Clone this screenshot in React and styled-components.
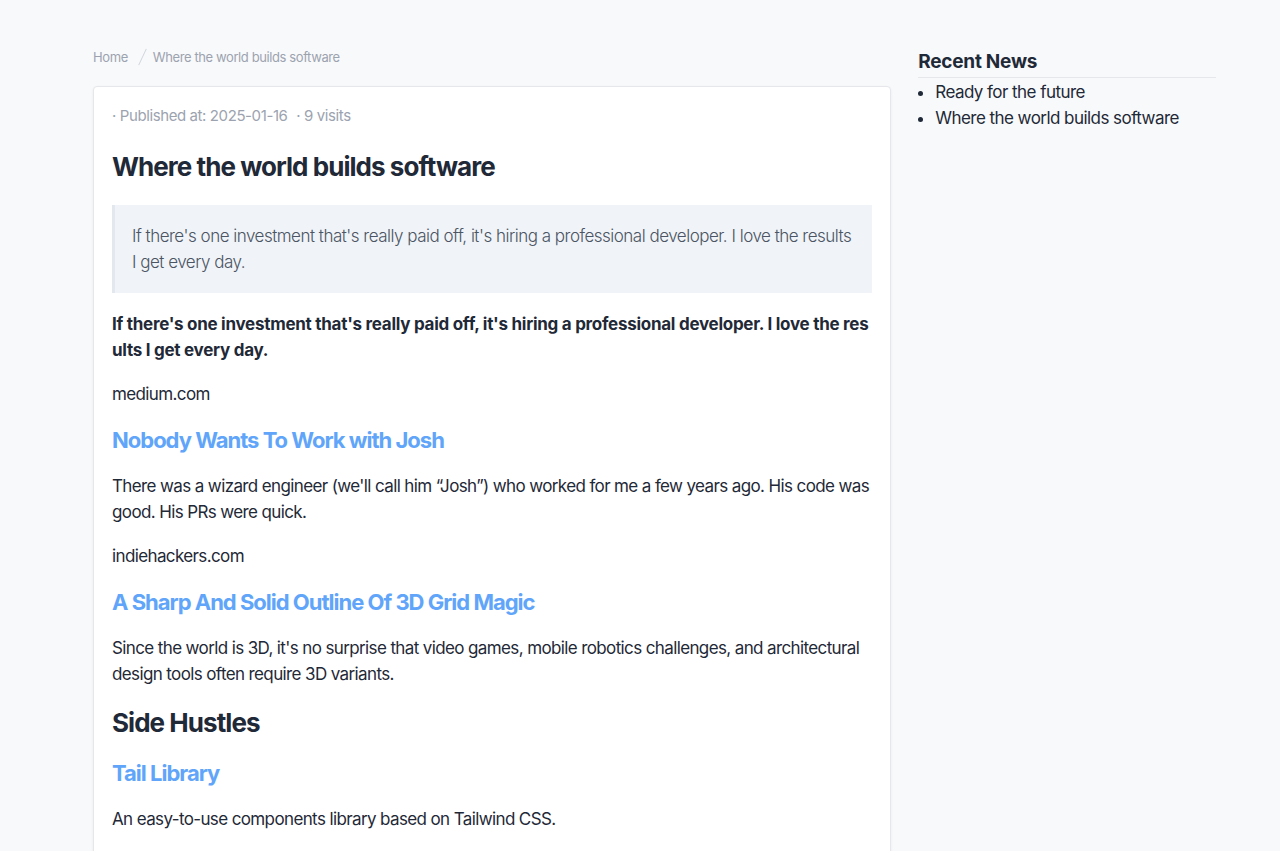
import React from 'react';
import styled, { createGlobalStyle } from 'styled-components';

const GlobalStyle = createGlobalStyle`
  body {
    margin: 0;
    background: #f8f9fb;
    font-family: Inter, "Noto Sans", sans-serif;
    color: #1f2937;
  }
`;

const Page = styled.div`
  display: flex;
  gap: 27px;
  padding: 47px 64px 0 93px;
  align-items: flex-start;
`;

const Main = styled.div`
  width: 799px;
  display: flex;
  flex-direction: column;
  gap: 19px;
`;

const Breadcrumb = styled.nav`
  display: flex;
  align-items: center;
  font-size: 13px;
  line-height: 20px;
  color: #9ca3af;
  letter-spacing: -0.4px;
`;

const Crumb = styled.span`
  color: #9ca3af;
`;

const Slash = styled.span`
  display: inline-block;
  width: 1px;
  height: 18px;
  background: #d1d5db;
  transform: rotate(25deg);
  margin: 0 10px 0 14px;
`;

const Card = styled.article`
  background: #fff;
  border: 1px solid #e5e7eb;
  border-radius: 4px;
  box-shadow: 0 1px 3px rgba(0, 0, 0, 0.06);
  padding: 18px 18px 40px;
  display: flex;
  flex-direction: column;
  gap: 18px;
`;

const Meta = styled.div`
  font-size: 15px;
  line-height: 22px;
  color: #9ca3af;
  margin-bottom: 6px;
  letter-spacing: -0.4px;
  span + span { margin-left: 5px; }
`;

const Title = styled.h1`
  margin: 0 0 4px;
  font-size: 26px;
  line-height: 32px;
  font-weight: 700;
  color: #1f2937;
  letter-spacing: -0.95px;
`;

const Quote = styled.blockquote`
  margin: 0;
  background: #f0f3f8;
  border-left: 3px solid #e3e7ee;
  padding: 18px 18px 18px 17px;
  font-size: 17px;
  line-height: 26px;
  color: #4b5563;
  font-weight: 300;
  letter-spacing: -0.5px;
`;

const Text = styled.p`
  margin: 0;
  font-size: 17px;
  line-height: 26px;
  color: #1f2937;
  letter-spacing: ${props => props.bold ? '-0.27px' : '-0.62px'};
  font-weight: ${props => props.bold ? 700 : 400};
  word-break: ${props => props.bold ? 'break-all' : 'normal'};
`;

const LinkTitle = styled.h2`
  margin: 0;
  font-size: 22px;
  line-height: 30px;
  font-weight: 700;
  color: #60a5fa;
  letter-spacing: -1px;
`;

const Section = styled.h1`
  margin: 2px 0 1px;
  font-size: 26px;
  line-height: 32px;
  font-weight: 700;
  color: #1f2937;
  letter-spacing: -0.95px;
`;

const Aside = styled.aside`
  width: 298px;
  padding-top: 3px;
`;

const AsideTitle = styled.h3`
  margin: 0;
  font-size: 19px;
  line-height: 24px;
  font-weight: 700;
  color: #1f2937;
  padding-bottom: 3px;
  border-bottom: 1px solid #e5e7eb;
  letter-spacing: -0.25px;
`;

const NewsList = styled.ul`
  margin: 1px 0 0;
  padding-left: 17px;
  list-style: disc;
`;

const NewsItem = styled.li`
  font-size: 17px;
  line-height: 26px;
  color: #1f2937;
  letter-spacing: -0.55px;
`;

const App = () => (
  <>
    <GlobalStyle />
    <Page>
      <Main>
        <Breadcrumb>
          <Crumb>Home</Crumb>
          <Slash />
          <Crumb>Where the world builds software</Crumb>
        </Breadcrumb>
        <Card>
          <Meta>
            <span>· Published at: 2025-01-16 </span>
            <span>· 9 visits</span>
          </Meta>
          <Title>Where the world builds software</Title>
          <Quote>
            If there's one investment that's really paid off, it's hiring a professional developer. I love the results I get every day.
          </Quote>
          <Text bold>
            If there's one investment that's really paid off, it's hiring a professional developer. I love the results I get every day.
          </Text>
          <Text>medium.com</Text>
          <LinkTitle>Nobody Wants To Work with Josh</LinkTitle>
          <Text>
            There was a wizard engineer (we'll call him “Josh”) who worked for me a few years ago. His code was good. His PRs were quick.
          </Text>
          <Text>indiehackers.com</Text>
          <LinkTitle>A Sharp And Solid Outline Of 3D Grid Magic</LinkTitle>
          <Text>
            Since the world is 3D, it's no surprise that video games, mobile robotics challenges, and architectural design tools often require 3D variants.
          </Text>
          <Section>Side Hustles</Section>
          <LinkTitle>Tail Library</LinkTitle>
          <Text>An easy-to-use components library based on Tailwind CSS.</Text>
        </Card>
      </Main>
      <Aside>
        <AsideTitle>Recent News</AsideTitle>
        <NewsList>
          <NewsItem>Ready for the future</NewsItem>
          <NewsItem>Where the world builds software</NewsItem>
        </NewsList>
      </Aside>
    </Page>
  </>
);

export default App;
